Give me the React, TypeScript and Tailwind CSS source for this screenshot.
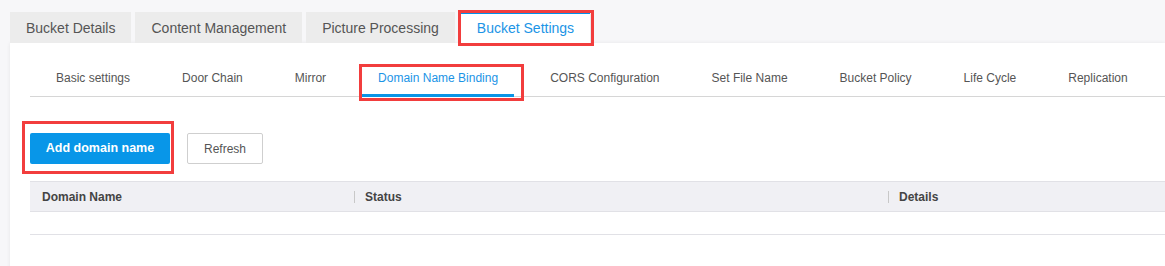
import React from "react";

const topTabs = ["Bucket Details", "Content Management", "Picture Processing"];
const subTabs = [
  "Basic settings",
  "Door Chain",
  "Mirror",
  "Domain Name Binding",
  "CORS Configuration",
  "Set File Name",
  "Bucket Policy",
  "Life Cycle",
  "Replication",
];

function RedBox({ className }: { className: string }) {
  return <div className={`pointer-events-none absolute z-20 border-[3px] border-[#f23d3d] ${className}`} />;
}

export default function App() {
  return (
    <div
      className="h-[266px] w-[1165px] overflow-hidden bg-[#f7f7f9] text-[#555]"
      style={{ fontFamily: '"Liberation Sans", Arial, sans-serif' }}
    >
      {/* top tabs */}
      <div className="flex items-end gap-[4px] pl-[10px] pt-[12px]">
        {topTabs.map((t) => (
          <div
            key={t}
            className="flex h-[31px] items-center bg-[#ececec] px-[16px] pt-[1px] text-[14px] text-[#555]"
          >
            {t}
          </div>
        ))}
        <div className="relative ml-[2px] flex h-[31px] items-center border-t-[2px] border-[#0091ea] bg-white px-[16px] text-[14px] text-[#1b94e6] shadow-[2px_0_2px_rgba(0,0,0,0.05)]">
          Bucket Settings
          <RedBox className="-left-[3px] -right-[4px] -top-[4px] -bottom-[3px]" />
        </div>
      </div>

      {/* panel */}
      <div className="ml-[10px] h-[240px] bg-white pl-[20px] shadow-[0_0_4px_rgba(0,0,0,0.07)]">
        {/* sub tabs */}
        <div className="flex gap-[20px] border-b border-[#d6d6d6] pl-[10px] pt-[17px]">
          {subTabs.map((t) => {
            const active = t === "Domain Name Binding";
            return (
              <div
                key={t}
                className={`relative flex h-[36px] items-center px-[16px] text-[12px] whitespace-nowrap ${
                  active ? "text-[#1b94e6]" : "text-[#555]"
                }`}
              >
                {t}
                {active && (
                  <>
                    <span className="absolute -bottom-[1px] left-0 right-0 h-[3px] bg-[#0a95e6]" />
                    <RedBox className="-left-[3px] -right-[10px] top-[4px] -bottom-[5px]" />
                  </>
                )}
              </div>
            );
          })}
        </div>

        {/* buttons */}
        <div className="mt-[36px] flex items-center gap-[17px]">
          <div className="relative">
            <button className="flex h-[31px] w-[140px] items-center justify-center rounded-[2px] bg-[#0896e8] text-[12.5px] font-bold text-white">
              Add domain name
            </button>
            <RedBox className="-left-[8px] -right-[4px] -top-[12px] -bottom-[10px]" />
          </div>
          <button className="flex h-[31px] w-[76px] items-center justify-center rounded-[2px] border border-[#cfcfcf] bg-white text-[12px] text-[#555]">
            Refresh
          </button>
        </div>

        {/* table */}
        <div className="mt-[17px]">
          <div className="grid h-[31px] grid-cols-[324px_534px_1fr] border-y border-[#e1e1e6] bg-[#f0f0f4] text-[12px] font-bold text-[#444]">
            <div className="flex items-center pl-[12px]">Domain Name</div>
            <div className="flex items-center">
              <span className="mr-[10px] h-[12px] w-px bg-[#c8c8c8]" />
              Status
            </div>
            <div className="flex items-center">
              <span className="mr-[10px] h-[12px] w-px bg-[#c8c8c8]" />
              Details
            </div>
          </div>
          <div className="h-[23px] border-b border-[#e1e1e6]" />
        </div>
      </div>
    </div>
  );
}
